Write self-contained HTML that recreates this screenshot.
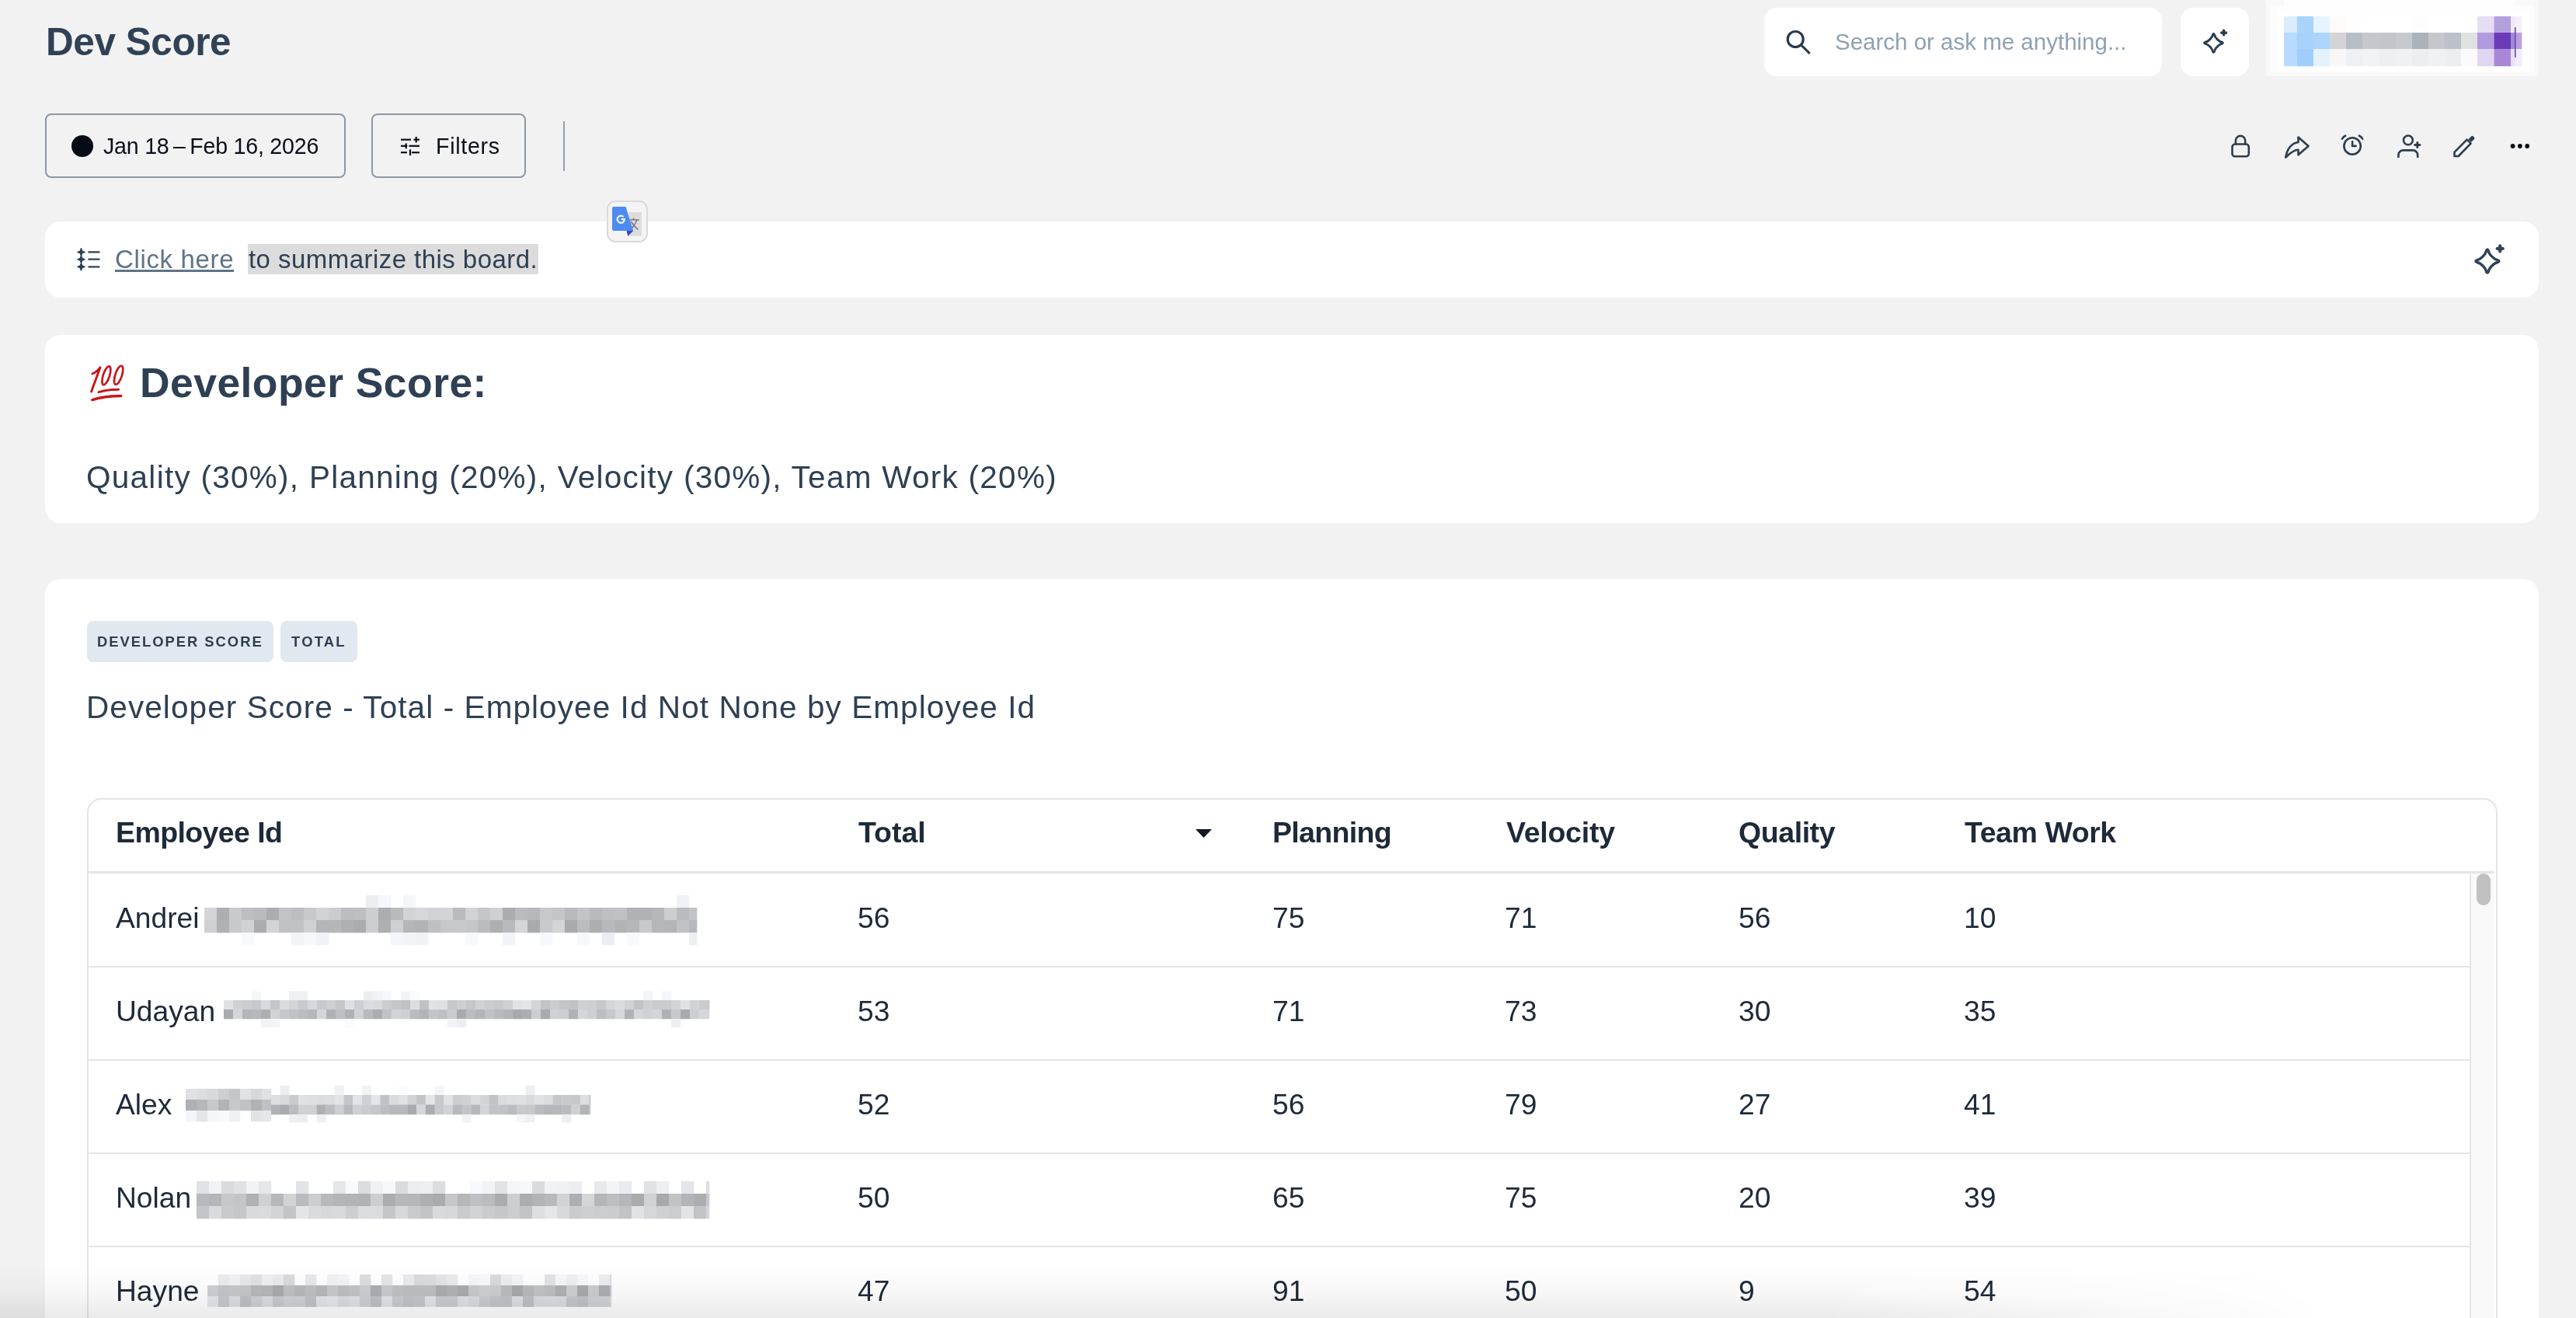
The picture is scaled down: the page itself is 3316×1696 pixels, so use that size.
<!DOCTYPE html>
<html><head><meta charset="utf-8"><title>Dev Score</title>
<style>
html,body{margin:0;padding:0;}
body{width:3316px;height:1696px;overflow:hidden;background:#f2f2f2;position:relative;font-family:"Liberation Sans", sans-serif;}
.t{position:absolute;white-space:pre;line-height:1;-webkit-font-smoothing:antialiased;will-change:transform;}
.box{position:absolute;}
.ab{position:absolute;overflow:visible;}
.tag{background:#e2e8f0;border-radius:8px;}
</style></head><body>
<div class="t" style="left:58.5px;top:29.10px;font-size:49.5px;font-weight:700;color:#2f4256;letter-spacing:-0.45px;">Dev Score</div>
<div class="box" style="left:2271px;top:10px;width:512px;height:88px;border-radius:16px;background:#fff"></div>
<svg class="ab" style="left:2296px;top:36px" width="36" height="36" viewBox="0 0 36 36">
<circle cx="15.2" cy="14.5" r="10" fill="none" stroke="#2a3a4c" stroke-width="3.2"/>
<line x1="22.5" y1="21.8" x2="32.5" y2="31.8" stroke="#2a3a4c" stroke-width="3.2" stroke-linecap="square"/></svg>
<div class="t" style="left:2362px;top:39.03px;font-size:29.5px;font-weight:400;color:#8fa1b3;letter-spacing:0px;">Search or ask me anything...</div>
<div class="box" style="left:2807px;top:10px;width:88px;height:88px;border-radius:16px;background:#fff"></div>
<svg class="ab" style="left:0;top:0" width="3316" height="400" viewBox="0 0 3316 400"><path d="M2848.40,44.70 Q2849.50,42.04 2850.60,44.70 C2851.10,48.30 2856.50,53.70 2860.10,54.20 Q2862.76,55.30 2860.10,56.40 C2856.50,56.90 2851.10,62.30 2850.60,65.90 Q2849.50,68.56 2848.40,65.90 C2847.90,62.30 2842.50,56.90 2838.90,56.40 Q2836.24,55.30 2838.90,54.20 C2842.50,53.70 2847.90,48.30 2848.40,44.70 Z" fill="none" stroke="#2c3d4f" stroke-width="2.9" stroke-linejoin="round"/><path d="M2862.00,39.10 Q2862.60,37.96 2863.20,39.10 C2863.30,41.30 2863.40,41.40 2865.60,41.50 Q2866.74,42.10 2865.60,42.70 C2863.40,42.80 2863.30,42.90 2863.20,45.10 Q2862.60,46.24 2862.00,45.10 C2861.90,42.90 2861.80,42.80 2859.60,42.70 Q2858.46,42.10 2859.60,41.50 C2861.80,41.40 2861.90,41.30 2862.00,39.10 Z" fill="#2c3d4f" stroke="#2c3d4f" stroke-width="2.2" stroke-linejoin="round"/></svg>
<div class="box" style="left:2917px;top:0px;width:351px;height:98px;background:#f9f9f9"></div>
<div class="box" style="left:2923px;top:7px;width:339px;height:86px;background:#fdfdfd"></div>
<div class="box" style="left:2940px;top:0px;width:297px;height:21px;background:#fefefe"></div>
<div class="box" style="left:2933px;top:14px;width:322px;height:78px;background:#fff"></div>
<svg class="ab" style="left:0;top:0" width="3316" height="100"><rect x="2940" y="21" width="17.3" height="21.3" fill="#dcecfc"/><rect x="2957" y="21" width="21.3" height="21.3" fill="#a8d4fc"/><rect x="2978" y="21" width="21.3" height="21.3" fill="#e6f4fe"/><rect x="2999" y="21" width="21.3" height="21.3" fill="#fdfbfa"/><rect x="3020" y="21" width="21.3" height="21.3" fill="#fefefe"/><rect x="3041" y="21" width="22.3" height="21.3" fill="#ffffff"/><rect x="3063" y="21" width="21.3" height="21.3" fill="#ffffff"/><rect x="3084" y="21" width="21.3" height="21.3" fill="#ffffff"/><rect x="3105" y="21" width="21.3" height="21.3" fill="#fdfdfd"/><rect x="3126" y="21" width="21.3" height="21.3" fill="#ffffff"/><rect x="3147" y="21" width="21.3" height="21.3" fill="#ffffff"/><rect x="3168" y="21" width="21.3" height="21.3" fill="#ffffff"/><rect x="3189" y="21" width="21.8" height="21.3" fill="#e6def4"/><rect x="3210.5" y="21" width="21.8" height="21.3" fill="#b5a0de"/><rect x="3232" y="21" width="5.3" height="21.3" fill="#eee8f8"/><rect x="3237" y="21" width="9.3" height="21.3" fill="#f4f0fa"/><rect x="2940" y="42" width="17.3" height="21.3" fill="#b8dafc"/><rect x="2957" y="42" width="21.3" height="21.3" fill="#a6d2fc"/><rect x="2978" y="42" width="21.3" height="21.3" fill="#acd4fc"/><rect x="2999" y="42" width="21.3" height="21.3" fill="#d4d4d6"/><rect x="3020" y="42" width="21.3" height="21.3" fill="#b8bec6"/><rect x="3041" y="42" width="22.3" height="21.3" fill="#c4c8cc"/><rect x="3063" y="42" width="21.3" height="21.3" fill="#c2c6ca"/><rect x="3084" y="42" width="21.3" height="21.3" fill="#c6cace"/><rect x="3105" y="42" width="21.3" height="21.3" fill="#acb2ba"/><rect x="3126" y="42" width="21.3" height="21.3" fill="#c4c8cc"/><rect x="3147" y="42" width="21.3" height="21.3" fill="#bcc0c8"/><rect x="3168" y="42" width="21.3" height="21.3" fill="#e0e2e2"/><rect x="3189" y="42" width="21.8" height="21.3" fill="#b19ade"/><rect x="3210.5" y="42" width="21.8" height="21.3" fill="#6a3cb8"/><rect x="3232" y="42" width="5.3" height="21.3" fill="#a088d8"/><rect x="3237" y="42" width="9.3" height="21.3" fill="#b8a0e0"/><rect x="2940" y="63" width="17.3" height="22.3" fill="#b8dafc"/><rect x="2957" y="63" width="21.3" height="22.3" fill="#a0cefc"/><rect x="2978" y="63" width="21.3" height="22.3" fill="#e4f2fe"/><rect x="2999" y="63" width="21.3" height="22.3" fill="#f8f6f6"/><rect x="3020" y="63" width="21.3" height="22.3" fill="#eff0f2"/><rect x="3041" y="63" width="22.3" height="22.3" fill="#f2f3f5"/><rect x="3063" y="63" width="21.3" height="22.3" fill="#eeeff1"/><rect x="3084" y="63" width="21.3" height="22.3" fill="#f0f1f3"/><rect x="3105" y="63" width="21.3" height="22.3" fill="#edeef0"/><rect x="3126" y="63" width="21.3" height="22.3" fill="#f0f1f3"/><rect x="3147" y="63" width="21.3" height="22.3" fill="#edeef0"/><rect x="3168" y="63" width="21.3" height="22.3" fill="#fbfbfb"/><rect x="3189" y="63" width="21.8" height="22.3" fill="#e0d6f2"/><rect x="3210.5" y="63" width="21.8" height="22.3" fill="#a888d6"/><rect x="3232" y="63" width="5.3" height="22.3" fill="#e8e0f6"/><rect x="3237" y="63" width="9.3" height="22.3" fill="#f0ecf8"/><rect x="3237" y="35" width="1.6" height="39" fill="#6a4ab0"/></svg>
<div class="box" style="left:58px;top:146px;width:387px;height:83px;border:2px solid #8c98a5;border-radius:8px;box-sizing:border-box"></div>
<div class="box" style="left:92px;top:174px;width:28px;height:28px;border-radius:50%;background:#060b16"></div>
<div class="t" style="left:132.5px;top:173.79px;font-size:28.6px;font-weight:400;color:#0a0f1a;letter-spacing:-0.22px;">Jan 18 – Feb 16, 2026</div>
<div class="box" style="left:478px;top:146px;width:199px;height:83px;border:2px solid #8c98a5;border-radius:8px;box-sizing:border-box"></div>
<svg class="ab" style="left:510px;top:170px" width="36" height="36" viewBox="510 170 36 36">
<g stroke="#0a0f1a" stroke-width="2.2" fill="none">
<line x1="516" y1="179.7" x2="529" y2="179.7"/><line x1="532.5" y1="179.7" x2="540" y2="179.7"/><line x1="535.7" y1="176" x2="535.7" y2="183.5"/>
<line x1="516" y1="187.8" x2="524.3" y2="187.8"/><line x1="526.5" y1="187.8" x2="540" y2="187.8"/><line x1="522.7" y1="184.4" x2="522.7" y2="191.2"/>
<line x1="516" y1="196.2" x2="524" y2="196.2"/><line x1="530" y1="196.2" x2="540" y2="196.2"/><line x1="528" y1="192.3" x2="528" y2="200"/>
</g></svg>
<div class="t" style="left:561px;top:173.79px;font-size:28.6px;font-weight:400;color:#0a0f1a;letter-spacing:0.7px;">Filters</div>
<div class="box" style="left:725px;top:156px;width:2px;height:64px;background:#949ea9"></div>
<svg class="ab" style="left:2860px;top:160px" width="420" height="60" viewBox="2860 160 420 60">
<g fill="none" stroke="#2c3d4f" stroke-width="2.6" stroke-linecap="round" stroke-linejoin="round">
<rect x="2873.5" y="185.5" width="21.3" height="15.8" rx="3.6"/>
<path d="M2877.9,185.3 V181 a6.15,6.15 0 0 1 12.3,0 V185.3"/>
<g transform="translate(2937.3,170) scale(1.63)" stroke-width="1.6"><path d="M13 4v4c-6.575 1.028 -9.02 6.788 -10 12c-.037 .206 5.384 -5.962 10 -6v4l8 -7l-8 -7z"/></g>
<circle cx="3028.1" cy="187.9" r="10.7"/>
<path d="M3028.1,182.2 V187.9 H3032.6"/>
<path d="M3015,178.6 a9,9 0 0 1 4.2,-3.9"/><path d="M3041.2,178.6 a9,9 0 0 0 -4.2,-3.9"/>
<circle cx="3099.9" cy="180.4" r="5.9"/>
<path d="M3087.4,201.9 V199.6 a6.2,6.2 0 0 1 6.2,-6.2 H3106 a6.2,6.2 0 0 1 6.2,6.2 V201.9"/>
<path d="M3159.5,201 V195.8 L3175.6,179.7 L3180.6,184.7 L3164.6,201 Z"/>
</g>
<path d="M3111.8,183.3 V189.7 M3108.6,186.5 H3115" stroke="#2c3d4f" stroke-width="2.8" stroke-linecap="round"/>
<path d="M3177.4,179.3 L3181.4,175.3 a1.5,1.5 0 0 1 2.1,0 L3185,176.8 a1.5,1.5 0 0 1 0,2.1 L3181,182.9 Z" fill="#2c3d4f"/>
<g fill="#0b1018"><circle cx="3234.6" cy="188" r="2.9"/><circle cx="3243.9" cy="188" r="2.9"/><circle cx="3253.2" cy="188" r="2.9"/></g>
</svg>
<div class="box" style="left:58px;top:285px;width:3210px;height:98px;border-radius:20px;background:#fff"></div>
<svg class="ab" style="left:95px;top:315px" width="40" height="36" viewBox="95 315 40 36">
<g fill="#2d4258" stroke="#2d4258" stroke-width="1.6" stroke-linejoin="round">
<path d="M104.5,319.8 L105.7,323.2 L108.9,324.4 L105.7,325.6 L104.5,329 L103.3,325.6 L100.1,324.4 L103.3,323.2 Z"/>
<path d="M104.5,329.2 L105.7,332.5 L108.9,333.7 L105.7,334.9 L104.5,338.2 L103.3,334.9 L100.1,333.7 L103.3,332.5 Z"/>
<path d="M104.5,338.7 L105.7,342.1 L108.9,343.3 L105.7,344.5 L104.5,347.8 L103.3,344.5 L100.1,343.3 L103.3,342.1 Z"/>
</g>
<g stroke="#2d4258" stroke-width="2.2" stroke-linecap="round"><line x1="114.3" y1="324.4" x2="127.6" y2="324.4"/><line x1="114.3" y1="333.7" x2="127.6" y2="333.7"/><line x1="114.3" y1="343.3" x2="127.6" y2="343.3"/></g>
</svg>
<div class="t" style="left:148px;top:317.07px;font-size:33px;font-weight:400;color:#5f7488;letter-spacing:0.65px;">Click here</div>
<div class="box" style="left:148px;top:347px;width:153px;height:3px;background:#5f7488"></div>
<div class="box" style="left:319px;top:313.5px;width:374px;height:39px;background:#dcdcdc"></div>
<div class="t" style="left:320px;top:317.07px;font-size:33px;font-weight:400;color:#2f4054;letter-spacing:0.45px;">to summarize this board.</div>
<svg class="ab" style="left:0;top:0" width="3316" height="400" viewBox="0 0 3316 400"><path d="M3200.50,322.70 Q3201.90,319.28 3203.30,322.70 C3203.90,327.30 3210.70,334.10 3215.30,334.70 Q3218.72,336.10 3215.30,337.50 C3210.70,338.10 3203.90,344.90 3203.30,349.50 Q3201.90,352.92 3200.50,349.50 C3199.90,344.90 3193.10,338.10 3188.50,337.50 Q3185.08,336.10 3188.50,334.70 C3193.10,334.10 3199.90,327.30 3200.50,322.70 Z" fill="none" stroke="#2f4358" stroke-width="3.3" stroke-linejoin="round"/><path d="M3217.50,316.20 Q3218.20,314.87 3218.90,316.20 C3219.00,318.90 3219.20,319.10 3221.90,319.20 Q3223.23,319.90 3221.90,320.60 C3219.20,320.70 3219.00,320.90 3218.90,323.60 Q3218.20,324.93 3217.50,323.60 C3217.40,320.90 3217.20,320.70 3214.50,320.60 Q3213.17,319.90 3214.50,319.20 C3217.20,319.10 3217.40,318.90 3217.50,316.20 Z" fill="#2f4358" stroke="#2f4358" stroke-width="2.6" stroke-linejoin="round"/></svg>
<div class="box" style="left:780.5px;top:258px;width:53px;height:53.5px;border:2px solid #dadada;border-radius:11px;background:#f4f4f4;box-sizing:border-box"></div>
<svg class="ab" style="left:780px;top:258px" width="54" height="54" viewBox="780 258 54 54">
<rect x="809.3" y="273" width="16.5" height="30.7" rx="1" fill="#dcdcdc"/>
<g stroke="#6e6e6e" stroke-width="1.3" fill="none"><line x1="811" y1="282.9" x2="822.8" y2="282.9"/><line x1="815.5" y1="280.5" x2="815.5" y2="283"/><path d="M811.5,296 C815,292 818,288 819.8,283"/><path d="M812.5,285 C815,290 818,293 821.5,295.5"/></g>
<path d="M790,265.9 H805.5 L815.2,297 H790 a2,2 0 0 1 -2,-2 V267.9 a2,2 0 0 1 2,-2 Z" fill="#4d8bf0"/>
<path d="M806.6,297 H815.2 L808.2,303.7 Z" fill="#3a47b5"/>
<path d="M802.6,279.0 A4.6,4.6 0 1 0 803.9,282.2 H799.6" fill="none" stroke="#eef3fd" stroke-width="2.2"/>
</svg>
<div class="box" style="left:58px;top:431px;width:3210px;height:242px;border-radius:20px;background:#fff"></div>
<svg class="ab" style="left:110px;top:462px" width="60" height="60" viewBox="110 462 60 60">
<g fill="none" stroke="#c8161a" stroke-linecap="round" stroke-linejoin="round">
<path d="M118.8,481 C122.5,479.5 126,476.5 129,472.8 C125.5,483 121,494 117.6,504" stroke-width="2.9"/>
<ellipse cx="136.9" cy="483.2" rx="4.1" ry="12.4" transform="rotate(18 136.9 483.2)" stroke-width="2.7"/>
<ellipse cx="152.6" cy="482.8" rx="4.3" ry="12.6" transform="rotate(18 152.6 482.8)" stroke-width="2.7"/>
<path d="M127,504.6 C135,502 144,501 152.6,501.2" stroke-width="3"/>
<path d="M118.8,514.6 C130,511 143,509.5 155.8,509.5" stroke-width="3.3"/>
</g></svg>
<div class="t" style="left:179.5px;top:466.41px;font-size:53.5px;font-weight:700;color:#2f4054;letter-spacing:0.42px;">Developer Score:</div>
<div class="t" style="left:111px;top:593.52px;font-size:40.5px;font-weight:400;color:#2f4054;letter-spacing:1.27px;">Quality (30%), Planning (20%), Velocity (30%), Team Work (20%)</div>
<div class="box" style="left:58px;top:745px;width:3210px;height:1000px;border-radius:20px;background:#fff"></div>
<div class="box tag" style="left:112px;top:799px;width:240px;height:52.5px"></div>
<div class="box tag" style="left:361px;top:799px;width:99px;height:52.5px"></div>
<div class="t" style="left:125px;top:816.72px;font-size:18.4px;font-weight:700;color:#2f3d4f;letter-spacing:1.98px;">DEVELOPER SCORE</div>
<div class="t" style="left:374.5px;top:816.72px;font-size:18.4px;font-weight:700;color:#2f3d4f;letter-spacing:2.25px;">TOTAL</div>
<div class="t" style="left:111px;top:889.72px;font-size:40.5px;font-weight:400;color:#2f4054;letter-spacing:1.08px;">Developer Score - Total - Employee Id Not None by Employee Id</div>
<div class="box" style="left:112px;top:1026.5px;width:3102.5px;height:800px;border:2px solid #e4e5e7;border-radius:18px;box-sizing:border-box"></div>
<div class="box" style="left:114px;top:1121px;width:3097px;height:3px;background:#e3e5e8"></div>
<div class="box" style="left:3179px;top:1124px;width:30px;height:700px;background:#f9f9f9;border-left:2px solid #e6e6e6"></div>
<div class="box" style="left:3188px;top:1124px;width:18px;height:41px;background:#c1c1c1;border-radius:9px"></div>
<div class="t" style="left:149px;top:1052.76px;font-size:37.5px;font-weight:700;color:#1e2a3a;letter-spacing:-0.6px;">Employee Id</div>
<div class="t" style="left:1105px;top:1052.76px;font-size:37.5px;font-weight:700;color:#1e2a3a;letter-spacing:0px;">Total</div>
<div class="t" style="left:1638px;top:1052.76px;font-size:37.5px;font-weight:700;color:#1e2a3a;letter-spacing:-0.67px;">Planning</div>
<div class="t" style="left:1939px;top:1052.76px;font-size:37.5px;font-weight:700;color:#1e2a3a;letter-spacing:-0.25px;">Velocity</div>
<div class="t" style="left:2238px;top:1052.76px;font-size:37.5px;font-weight:700;color:#1e2a3a;letter-spacing:-0.43px;">Quality</div>
<div class="t" style="left:2529px;top:1052.76px;font-size:37.5px;font-weight:700;color:#1e2a3a;letter-spacing:-0.44px;">Team Work</div>
<svg class="ab" style="left:1535px;top:1062px" width="30" height="20" viewBox="1535 1062 30 20"><path d="M1539,1067 H1560 L1549.5,1078 Z" fill="#0f1722"/></svg>
<div class="t" style="left:149px;top:1162.51px;font-size:37.2px;font-weight:400;color:#1e2a3a;letter-spacing:0px;">Andrei</div>
<div class="t" style="left:1104px;top:1162.51px;font-size:37.2px;font-weight:400;color:#1e2a3a;letter-spacing:0px;">56</div>
<div class="t" style="left:1638px;top:1162.51px;font-size:37.2px;font-weight:400;color:#1e2a3a;letter-spacing:0px;">75</div>
<div class="t" style="left:1937px;top:1162.51px;font-size:37.2px;font-weight:400;color:#1e2a3a;letter-spacing:0px;">71</div>
<div class="t" style="left:2238px;top:1162.51px;font-size:37.2px;font-weight:400;color:#1e2a3a;letter-spacing:0px;">56</div>
<div class="t" style="left:2528px;top:1162.51px;font-size:37.2px;font-weight:400;color:#1e2a3a;letter-spacing:0px;">10</div>
<div class="box" style="left:114px;top:1242.5px;width:3065px;height:2.5px;background:#e5e5e7"></div>
<div class="t" style="left:149px;top:1282.61px;font-size:37.2px;font-weight:400;color:#1e2a3a;letter-spacing:0px;">Udayan</div>
<div class="t" style="left:1104px;top:1282.61px;font-size:37.2px;font-weight:400;color:#1e2a3a;letter-spacing:0px;">53</div>
<div class="t" style="left:1638px;top:1282.61px;font-size:37.2px;font-weight:400;color:#1e2a3a;letter-spacing:0px;">71</div>
<div class="t" style="left:1937px;top:1282.61px;font-size:37.2px;font-weight:400;color:#1e2a3a;letter-spacing:0px;">73</div>
<div class="t" style="left:2238px;top:1282.61px;font-size:37.2px;font-weight:400;color:#1e2a3a;letter-spacing:0px;">30</div>
<div class="t" style="left:2528px;top:1282.61px;font-size:37.2px;font-weight:400;color:#1e2a3a;letter-spacing:0px;">35</div>
<div class="box" style="left:114px;top:1362.6px;width:3065px;height:2.5px;background:#e5e5e7"></div>
<div class="t" style="left:149px;top:1402.71px;font-size:37.2px;font-weight:400;color:#1e2a3a;letter-spacing:0px;">Alex</div>
<div class="t" style="left:1104px;top:1402.71px;font-size:37.2px;font-weight:400;color:#1e2a3a;letter-spacing:0px;">52</div>
<div class="t" style="left:1638px;top:1402.71px;font-size:37.2px;font-weight:400;color:#1e2a3a;letter-spacing:0px;">56</div>
<div class="t" style="left:1937px;top:1402.71px;font-size:37.2px;font-weight:400;color:#1e2a3a;letter-spacing:0px;">79</div>
<div class="t" style="left:2238px;top:1402.71px;font-size:37.2px;font-weight:400;color:#1e2a3a;letter-spacing:0px;">27</div>
<div class="t" style="left:2528px;top:1402.71px;font-size:37.2px;font-weight:400;color:#1e2a3a;letter-spacing:0px;">41</div>
<div class="box" style="left:114px;top:1482.7px;width:3065px;height:2.5px;background:#e5e5e7"></div>
<div class="t" style="left:149px;top:1522.81px;font-size:37.2px;font-weight:400;color:#1e2a3a;letter-spacing:0px;">Nolan</div>
<div class="t" style="left:1104px;top:1522.81px;font-size:37.2px;font-weight:400;color:#1e2a3a;letter-spacing:0px;">50</div>
<div class="t" style="left:1638px;top:1522.81px;font-size:37.2px;font-weight:400;color:#1e2a3a;letter-spacing:0px;">65</div>
<div class="t" style="left:1937px;top:1522.81px;font-size:37.2px;font-weight:400;color:#1e2a3a;letter-spacing:0px;">75</div>
<div class="t" style="left:2238px;top:1522.81px;font-size:37.2px;font-weight:400;color:#1e2a3a;letter-spacing:0px;">20</div>
<div class="t" style="left:2528px;top:1522.81px;font-size:37.2px;font-weight:400;color:#1e2a3a;letter-spacing:0px;">39</div>
<div class="box" style="left:114px;top:1602.8px;width:3065px;height:2.5px;background:#e5e5e7"></div>
<div class="t" style="left:149px;top:1642.91px;font-size:37.2px;font-weight:400;color:#1e2a3a;letter-spacing:0px;">Hayne</div>
<div class="t" style="left:1104px;top:1642.91px;font-size:37.2px;font-weight:400;color:#1e2a3a;letter-spacing:0px;">47</div>
<div class="t" style="left:1638px;top:1642.91px;font-size:37.2px;font-weight:400;color:#1e2a3a;letter-spacing:0px;">91</div>
<div class="t" style="left:1937px;top:1642.91px;font-size:37.2px;font-weight:400;color:#1e2a3a;letter-spacing:0px;">50</div>
<div class="t" style="left:2238px;top:1642.91px;font-size:37.2px;font-weight:400;color:#1e2a3a;letter-spacing:0px;">9</div>
<div class="t" style="left:2528px;top:1642.91px;font-size:37.2px;font-weight:400;color:#1e2a3a;letter-spacing:0px;">54</div>
<svg class="ab" style="left:0;top:0" width="3316" height="1696" viewBox="0 0 3316 1696"><rect x="471.0" y="1152.0" width="16.3" height="16.3" fill="rgb(237,238,242)"/><rect x="487.0" y="1152.0" width="16.3" height="16.3" fill="rgb(246,247,251)"/><rect x="519.0" y="1152.0" width="16.3" height="16.3" fill="rgb(245,246,250)"/><rect x="871.0" y="1152.0" width="16.3" height="16.3" fill="rgb(241,242,246)"/><rect x="263.0" y="1168.0" width="16.3" height="16.3" fill="rgb(212,213,217)"/><rect x="279.0" y="1168.0" width="16.3" height="16.3" fill="rgb(173,174,178)"/><rect x="295.0" y="1168.0" width="16.3" height="16.3" fill="rgb(201,202,206)"/><rect x="311.0" y="1168.0" width="16.3" height="16.3" fill="rgb(189,190,194)"/><rect x="327.0" y="1168.0" width="16.3" height="16.3" fill="rgb(186,187,191)"/><rect x="343.0" y="1168.0" width="16.3" height="16.3" fill="rgb(172,173,177)"/><rect x="359.0" y="1168.0" width="16.3" height="16.3" fill="rgb(194,195,199)"/><rect x="375.0" y="1168.0" width="16.3" height="16.3" fill="rgb(189,190,194)"/><rect x="391.0" y="1168.0" width="16.3" height="16.3" fill="rgb(199,200,204)"/><rect x="407.0" y="1168.0" width="16.3" height="16.3" fill="rgb(210,211,215)"/><rect x="423.0" y="1168.0" width="16.3" height="16.3" fill="rgb(203,204,208)"/><rect x="439.0" y="1168.0" width="16.3" height="16.3" fill="rgb(188,189,193)"/><rect x="455.0" y="1168.0" width="16.3" height="16.3" fill="rgb(190,191,195)"/><rect x="471.0" y="1168.0" width="16.3" height="16.3" fill="rgb(205,206,210)"/><rect x="487.0" y="1168.0" width="16.3" height="16.3" fill="rgb(172,173,177)"/><rect x="503.0" y="1168.0" width="16.3" height="16.3" fill="rgb(185,186,190)"/><rect x="519.0" y="1168.0" width="16.3" height="16.3" fill="rgb(210,211,215)"/><rect x="535.0" y="1168.0" width="16.3" height="16.3" fill="rgb(214,215,219)"/><rect x="551.0" y="1168.0" width="16.3" height="16.3" fill="rgb(209,210,214)"/><rect x="567.0" y="1168.0" width="16.3" height="16.3" fill="rgb(211,212,216)"/><rect x="583.0" y="1168.0" width="16.3" height="16.3" fill="rgb(186,187,191)"/><rect x="599.0" y="1168.0" width="16.3" height="16.3" fill="rgb(210,211,215)"/><rect x="615.0" y="1168.0" width="16.3" height="16.3" fill="rgb(197,198,202)"/><rect x="631.0" y="1168.0" width="16.3" height="16.3" fill="rgb(207,208,212)"/><rect x="647.0" y="1168.0" width="16.3" height="16.3" fill="rgb(171,172,176)"/><rect x="663.0" y="1168.0" width="16.3" height="16.3" fill="rgb(186,187,191)"/><rect x="679.0" y="1168.0" width="16.3" height="16.3" fill="rgb(183,184,188)"/><rect x="695.0" y="1168.0" width="16.3" height="16.3" fill="rgb(199,200,204)"/><rect x="711.0" y="1168.0" width="16.3" height="16.3" fill="rgb(196,197,201)"/><rect x="727.0" y="1168.0" width="16.3" height="16.3" fill="rgb(185,186,190)"/><rect x="743.0" y="1168.0" width="16.3" height="16.3" fill="rgb(195,196,200)"/><rect x="759.0" y="1168.0" width="16.3" height="16.3" fill="rgb(185,186,190)"/><rect x="775.0" y="1168.0" width="16.3" height="16.3" fill="rgb(190,191,195)"/><rect x="791.0" y="1168.0" width="16.3" height="16.3" fill="rgb(192,193,197)"/><rect x="807.0" y="1168.0" width="16.3" height="16.3" fill="rgb(177,178,182)"/><rect x="823.0" y="1168.0" width="16.3" height="16.3" fill="rgb(177,178,182)"/><rect x="839.0" y="1168.0" width="16.3" height="16.3" fill="rgb(182,183,187)"/><rect x="855.0" y="1168.0" width="16.3" height="16.3" fill="rgb(205,206,210)"/><rect x="871.0" y="1168.0" width="16.3" height="16.3" fill="rgb(186,187,191)"/><rect x="887.0" y="1168.0" width="10.3" height="16.3" fill="rgb(194,195,199)"/><rect x="263.0" y="1184.0" width="16.3" height="16.3" fill="rgb(207,208,212)"/><rect x="279.0" y="1184.0" width="16.3" height="16.3" fill="rgb(176,177,181)"/><rect x="295.0" y="1184.0" width="16.3" height="16.3" fill="rgb(200,201,205)"/><rect x="311.0" y="1184.0" width="16.3" height="16.3" fill="rgb(209,210,214)"/><rect x="327.0" y="1184.0" width="16.3" height="16.3" fill="rgb(171,172,176)"/><rect x="343.0" y="1184.0" width="16.3" height="16.3" fill="rgb(211,212,216)"/><rect x="359.0" y="1184.0" width="16.3" height="16.3" fill="rgb(193,194,198)"/><rect x="375.0" y="1184.0" width="16.3" height="16.3" fill="rgb(193,194,198)"/><rect x="391.0" y="1184.0" width="16.3" height="16.3" fill="rgb(208,209,213)"/><rect x="407.0" y="1184.0" width="16.3" height="16.3" fill="rgb(180,181,185)"/><rect x="423.0" y="1184.0" width="16.3" height="16.3" fill="rgb(181,182,186)"/><rect x="439.0" y="1184.0" width="16.3" height="16.3" fill="rgb(175,176,180)"/><rect x="455.0" y="1184.0" width="16.3" height="16.3" fill="rgb(171,172,176)"/><rect x="471.0" y="1184.0" width="16.3" height="16.3" fill="rgb(204,205,209)"/><rect x="487.0" y="1184.0" width="16.3" height="16.3" fill="rgb(174,175,179)"/><rect x="503.0" y="1184.0" width="16.3" height="16.3" fill="rgb(207,208,212)"/><rect x="519.0" y="1184.0" width="16.3" height="16.3" fill="rgb(181,182,186)"/><rect x="535.0" y="1184.0" width="16.3" height="16.3" fill="rgb(177,178,182)"/><rect x="551.0" y="1184.0" width="16.3" height="16.3" fill="rgb(190,191,195)"/><rect x="567.0" y="1184.0" width="16.3" height="16.3" fill="rgb(198,199,203)"/><rect x="583.0" y="1184.0" width="16.3" height="16.3" fill="rgb(199,200,204)"/><rect x="599.0" y="1184.0" width="16.3" height="16.3" fill="rgb(197,198,202)"/><rect x="615.0" y="1184.0" width="16.3" height="16.3" fill="rgb(187,188,192)"/><rect x="631.0" y="1184.0" width="16.3" height="16.3" fill="rgb(174,175,179)"/><rect x="647.0" y="1184.0" width="16.3" height="16.3" fill="rgb(184,185,189)"/><rect x="663.0" y="1184.0" width="16.3" height="16.3" fill="rgb(212,213,217)"/><rect x="679.0" y="1184.0" width="16.3" height="16.3" fill="rgb(169,170,174)"/><rect x="695.0" y="1184.0" width="16.3" height="16.3" fill="rgb(201,202,206)"/><rect x="711.0" y="1184.0" width="16.3" height="16.3" fill="rgb(212,213,217)"/><rect x="727.0" y="1184.0" width="16.3" height="16.3" fill="rgb(169,170,174)"/><rect x="743.0" y="1184.0" width="16.3" height="16.3" fill="rgb(187,188,192)"/><rect x="759.0" y="1184.0" width="16.3" height="16.3" fill="rgb(173,174,178)"/><rect x="775.0" y="1184.0" width="16.3" height="16.3" fill="rgb(184,185,189)"/><rect x="791.0" y="1184.0" width="16.3" height="16.3" fill="rgb(178,179,183)"/><rect x="807.0" y="1184.0" width="16.3" height="16.3" fill="rgb(182,183,187)"/><rect x="823.0" y="1184.0" width="16.3" height="16.3" fill="rgb(200,201,205)"/><rect x="839.0" y="1184.0" width="16.3" height="16.3" fill="rgb(182,183,187)"/><rect x="855.0" y="1184.0" width="16.3" height="16.3" fill="rgb(180,181,185)"/><rect x="871.0" y="1184.0" width="16.3" height="16.3" fill="rgb(193,194,198)"/><rect x="887.0" y="1184.0" width="10.3" height="16.3" fill="rgb(182,183,187)"/><rect x="311.0" y="1200.0" width="16.3" height="16.3" fill="rgb(248,249,253)"/><rect x="375.0" y="1200.0" width="16.3" height="16.3" fill="rgb(243,244,248)"/><rect x="391.0" y="1200.0" width="16.3" height="16.3" fill="rgb(247,248,252)"/><rect x="407.0" y="1200.0" width="16.3" height="16.3" fill="rgb(241,242,246)"/><rect x="503.0" y="1200.0" width="16.3" height="16.3" fill="rgb(245,246,250)"/><rect x="519.0" y="1200.0" width="16.3" height="16.3" fill="rgb(243,244,248)"/><rect x="535.0" y="1200.0" width="16.3" height="16.3" fill="rgb(241,242,246)"/><rect x="599.0" y="1200.0" width="16.3" height="16.3" fill="rgb(248,249,253)"/><rect x="647.0" y="1200.0" width="16.3" height="16.3" fill="rgb(242,243,247)"/><rect x="695.0" y="1200.0" width="16.3" height="16.3" fill="rgb(247,248,252)"/><rect x="743.0" y="1200.0" width="16.3" height="16.3" fill="rgb(247,248,252)"/><rect x="775.0" y="1200.0" width="16.3" height="16.3" fill="rgb(236,237,241)"/><rect x="807.0" y="1200.0" width="16.3" height="16.3" fill="rgb(248,249,253)"/><rect x="887.0" y="1200.0" width="10.3" height="16.3" fill="rgb(238,239,243)"/><rect x="324.0" y="1275.5" width="12.3" height="11.8" fill="rgb(246,247,251)"/><rect x="372.0" y="1275.5" width="12.3" height="11.8" fill="rgb(239,240,244)"/><rect x="384.0" y="1275.5" width="12.3" height="11.8" fill="rgb(239,240,244)"/><rect x="468.0" y="1275.5" width="12.3" height="11.8" fill="rgb(236,237,241)"/><rect x="480.0" y="1275.5" width="12.3" height="11.8" fill="rgb(241,242,246)"/><rect x="492.0" y="1275.5" width="12.3" height="11.8" fill="rgb(246,247,251)"/><rect x="516.0" y="1275.5" width="12.3" height="11.8" fill="rgb(242,243,247)"/><rect x="528.0" y="1275.5" width="12.3" height="11.8" fill="rgb(250,251,255)"/><rect x="828.0" y="1275.5" width="12.3" height="11.8" fill="rgb(243,244,248)"/><rect x="852.0" y="1275.5" width="12.3" height="11.8" fill="rgb(245,246,250)"/><rect x="288.0" y="1287.0" width="12.3" height="12.3" fill="rgb(225,226,230)"/><rect x="300.0" y="1287.0" width="12.3" height="12.3" fill="rgb(208,209,213)"/><rect x="312.0" y="1287.0" width="12.3" height="12.3" fill="rgb(204,205,209)"/><rect x="324.0" y="1287.0" width="12.3" height="12.3" fill="rgb(200,201,205)"/><rect x="336.0" y="1287.0" width="12.3" height="12.3" fill="rgb(217,218,222)"/><rect x="348.0" y="1287.0" width="12.3" height="12.3" fill="rgb(196,197,201)"/><rect x="360.0" y="1287.0" width="12.3" height="12.3" fill="rgb(219,220,224)"/><rect x="372.0" y="1287.0" width="12.3" height="12.3" fill="rgb(211,212,216)"/><rect x="384.0" y="1287.0" width="12.3" height="12.3" fill="rgb(201,202,206)"/><rect x="396.0" y="1287.0" width="12.3" height="12.3" fill="rgb(215,216,220)"/><rect x="408.0" y="1287.0" width="12.3" height="12.3" fill="rgb(200,201,205)"/><rect x="420.0" y="1287.0" width="12.3" height="12.3" fill="rgb(206,207,211)"/><rect x="432.0" y="1287.0" width="12.3" height="12.3" fill="rgb(198,199,203)"/><rect x="444.0" y="1287.0" width="12.3" height="12.3" fill="rgb(223,224,228)"/><rect x="456.0" y="1287.0" width="12.3" height="12.3" fill="rgb(206,207,211)"/><rect x="468.0" y="1287.0" width="12.3" height="12.3" fill="rgb(219,220,224)"/><rect x="480.0" y="1287.0" width="12.3" height="12.3" fill="rgb(217,218,222)"/><rect x="492.0" y="1287.0" width="12.3" height="12.3" fill="rgb(204,205,209)"/><rect x="504.0" y="1287.0" width="12.3" height="12.3" fill="rgb(197,198,202)"/><rect x="516.0" y="1287.0" width="12.3" height="12.3" fill="rgb(193,194,198)"/><rect x="528.0" y="1287.0" width="12.3" height="12.3" fill="rgb(221,222,226)"/><rect x="540.0" y="1287.0" width="12.3" height="12.3" fill="rgb(193,194,198)"/><rect x="552.0" y="1287.0" width="12.3" height="12.3" fill="rgb(225,226,230)"/><rect x="564.0" y="1287.0" width="12.3" height="12.3" fill="rgb(224,225,229)"/><rect x="576.0" y="1287.0" width="12.3" height="12.3" fill="rgb(199,200,204)"/><rect x="588.0" y="1287.0" width="12.3" height="12.3" fill="rgb(206,207,211)"/><rect x="600.0" y="1287.0" width="12.3" height="12.3" fill="rgb(198,199,203)"/><rect x="612.0" y="1287.0" width="12.3" height="12.3" fill="rgb(209,210,214)"/><rect x="624.0" y="1287.0" width="12.3" height="12.3" fill="rgb(203,204,208)"/><rect x="636.0" y="1287.0" width="12.3" height="12.3" fill="rgb(200,201,205)"/><rect x="648.0" y="1287.0" width="12.3" height="12.3" fill="rgb(208,209,213)"/><rect x="660.0" y="1287.0" width="12.3" height="12.3" fill="rgb(226,227,231)"/><rect x="672.0" y="1287.0" width="12.3" height="12.3" fill="rgb(228,229,233)"/><rect x="684.0" y="1287.0" width="12.3" height="12.3" fill="rgb(212,213,217)"/><rect x="696.0" y="1287.0" width="12.3" height="12.3" fill="rgb(195,196,200)"/><rect x="708.0" y="1287.0" width="12.3" height="12.3" fill="rgb(203,204,208)"/><rect x="720.0" y="1287.0" width="12.3" height="12.3" fill="rgb(196,197,201)"/><rect x="732.0" y="1287.0" width="12.3" height="12.3" fill="rgb(193,194,198)"/><rect x="744.0" y="1287.0" width="12.3" height="12.3" fill="rgb(208,209,213)"/><rect x="756.0" y="1287.0" width="12.3" height="12.3" fill="rgb(206,207,211)"/><rect x="768.0" y="1287.0" width="12.3" height="12.3" fill="rgb(199,200,204)"/><rect x="780.0" y="1287.0" width="12.3" height="12.3" fill="rgb(213,214,218)"/><rect x="792.0" y="1287.0" width="12.3" height="12.3" fill="rgb(218,219,223)"/><rect x="804.0" y="1287.0" width="12.3" height="12.3" fill="rgb(209,210,214)"/><rect x="816.0" y="1287.0" width="12.3" height="12.3" fill="rgb(194,195,199)"/><rect x="828.0" y="1287.0" width="12.3" height="12.3" fill="rgb(207,208,212)"/><rect x="840.0" y="1287.0" width="12.3" height="12.3" fill="rgb(202,203,207)"/><rect x="852.0" y="1287.0" width="12.3" height="12.3" fill="rgb(203,204,208)"/><rect x="864.0" y="1287.0" width="12.3" height="12.3" fill="rgb(211,212,216)"/><rect x="876.0" y="1287.0" width="12.3" height="12.3" fill="rgb(225,226,230)"/><rect x="888.0" y="1287.0" width="12.3" height="12.3" fill="rgb(210,211,215)"/><rect x="900.0" y="1287.0" width="12.3" height="12.3" fill="rgb(203,204,208)"/><rect x="912.0" y="1287.0" width="1.3" height="12.3" fill="rgb(193,194,198)"/><rect x="288.0" y="1299.0" width="12.3" height="12.3" fill="rgb(170,171,175)"/><rect x="300.0" y="1299.0" width="12.3" height="12.3" fill="rgb(214,215,219)"/><rect x="312.0" y="1299.0" width="12.3" height="12.3" fill="rgb(180,181,185)"/><rect x="324.0" y="1299.0" width="12.3" height="12.3" fill="rgb(183,184,188)"/><rect x="336.0" y="1299.0" width="12.3" height="12.3" fill="rgb(174,175,179)"/><rect x="348.0" y="1299.0" width="12.3" height="12.3" fill="rgb(209,210,214)"/><rect x="360.0" y="1299.0" width="12.3" height="12.3" fill="rgb(199,200,204)"/><rect x="372.0" y="1299.0" width="12.3" height="12.3" fill="rgb(193,194,198)"/><rect x="384.0" y="1299.0" width="12.3" height="12.3" fill="rgb(187,188,192)"/><rect x="396.0" y="1299.0" width="12.3" height="12.3" fill="rgb(182,183,187)"/><rect x="408.0" y="1299.0" width="12.3" height="12.3" fill="rgb(213,214,218)"/><rect x="420.0" y="1299.0" width="12.3" height="12.3" fill="rgb(176,177,181)"/><rect x="432.0" y="1299.0" width="12.3" height="12.3" fill="rgb(190,191,195)"/><rect x="444.0" y="1299.0" width="12.3" height="12.3" fill="rgb(176,177,181)"/><rect x="456.0" y="1299.0" width="12.3" height="12.3" fill="rgb(208,209,213)"/><rect x="468.0" y="1299.0" width="12.3" height="12.3" fill="rgb(184,185,189)"/><rect x="480.0" y="1299.0" width="12.3" height="12.3" fill="rgb(171,172,176)"/><rect x="492.0" y="1299.0" width="12.3" height="12.3" fill="rgb(192,193,197)"/><rect x="504.0" y="1299.0" width="12.3" height="12.3" fill="rgb(210,211,215)"/><rect x="516.0" y="1299.0" width="12.3" height="12.3" fill="rgb(206,207,211)"/><rect x="528.0" y="1299.0" width="12.3" height="12.3" fill="rgb(186,187,191)"/><rect x="540.0" y="1299.0" width="12.3" height="12.3" fill="rgb(179,180,184)"/><rect x="552.0" y="1299.0" width="12.3" height="12.3" fill="rgb(196,197,201)"/><rect x="564.0" y="1299.0" width="12.3" height="12.3" fill="rgb(191,192,196)"/><rect x="576.0" y="1299.0" width="12.3" height="12.3" fill="rgb(203,204,208)"/><rect x="588.0" y="1299.0" width="12.3" height="12.3" fill="rgb(170,171,175)"/><rect x="600.0" y="1299.0" width="12.3" height="12.3" fill="rgb(187,188,192)"/><rect x="612.0" y="1299.0" width="12.3" height="12.3" fill="rgb(179,180,184)"/><rect x="624.0" y="1299.0" width="12.3" height="12.3" fill="rgb(192,193,197)"/><rect x="636.0" y="1299.0" width="12.3" height="12.3" fill="rgb(185,186,190)"/><rect x="648.0" y="1299.0" width="12.3" height="12.3" fill="rgb(180,181,185)"/><rect x="660.0" y="1299.0" width="12.3" height="12.3" fill="rgb(168,169,173)"/><rect x="672.0" y="1299.0" width="12.3" height="12.3" fill="rgb(173,174,178)"/><rect x="684.0" y="1299.0" width="12.3" height="12.3" fill="rgb(205,206,210)"/><rect x="696.0" y="1299.0" width="12.3" height="12.3" fill="rgb(169,170,174)"/><rect x="708.0" y="1299.0" width="12.3" height="12.3" fill="rgb(208,209,213)"/><rect x="720.0" y="1299.0" width="12.3" height="12.3" fill="rgb(205,206,210)"/><rect x="732.0" y="1299.0" width="12.3" height="12.3" fill="rgb(177,178,182)"/><rect x="744.0" y="1299.0" width="12.3" height="12.3" fill="rgb(213,214,218)"/><rect x="756.0" y="1299.0" width="12.3" height="12.3" fill="rgb(206,207,211)"/><rect x="768.0" y="1299.0" width="12.3" height="12.3" fill="rgb(188,189,193)"/><rect x="780.0" y="1299.0" width="12.3" height="12.3" fill="rgb(199,200,204)"/><rect x="792.0" y="1299.0" width="12.3" height="12.3" fill="rgb(214,215,219)"/><rect x="804.0" y="1299.0" width="12.3" height="12.3" fill="rgb(177,178,182)"/><rect x="816.0" y="1299.0" width="12.3" height="12.3" fill="rgb(213,214,218)"/><rect x="828.0" y="1299.0" width="12.3" height="12.3" fill="rgb(208,209,213)"/><rect x="840.0" y="1299.0" width="12.3" height="12.3" fill="rgb(212,213,217)"/><rect x="852.0" y="1299.0" width="12.3" height="12.3" fill="rgb(176,177,181)"/><rect x="864.0" y="1299.0" width="12.3" height="12.3" fill="rgb(200,201,205)"/><rect x="876.0" y="1299.0" width="12.3" height="12.3" fill="rgb(169,170,174)"/><rect x="888.0" y="1299.0" width="12.3" height="12.3" fill="rgb(205,206,210)"/><rect x="900.0" y="1299.0" width="12.3" height="12.3" fill="rgb(213,214,218)"/><rect x="912.0" y="1299.0" width="1.3" height="12.3" fill="rgb(212,213,217)"/><rect x="336.0" y="1311.0" width="12.3" height="11.3" fill="rgb(242,243,247)"/><rect x="348.0" y="1311.0" width="12.3" height="11.3" fill="rgb(244,245,249)"/><rect x="444.0" y="1311.0" width="12.3" height="11.3" fill="rgb(250,251,255)"/><rect x="576.0" y="1311.0" width="12.3" height="11.3" fill="rgb(243,244,248)"/><rect x="588.0" y="1311.0" width="12.3" height="11.3" fill="rgb(237,238,242)"/><rect x="864.0" y="1311.0" width="12.3" height="11.3" fill="rgb(239,240,244)"/><rect x="239.0" y="1401.0" width="14.3" height="14.3" fill="rgb(224,225,229)"/><rect x="253.0" y="1401.0" width="14.3" height="14.3" fill="rgb(220,221,225)"/><rect x="267.0" y="1401.0" width="14.3" height="14.3" fill="rgb(216,217,221)"/><rect x="281.0" y="1401.0" width="14.3" height="14.3" fill="rgb(205,206,210)"/><rect x="295.0" y="1401.0" width="14.3" height="14.3" fill="rgb(197,198,202)"/><rect x="309.0" y="1401.0" width="14.3" height="14.3" fill="rgb(225,226,230)"/><rect x="323.0" y="1401.0" width="14.3" height="14.3" fill="rgb(215,216,220)"/><rect x="337.0" y="1401.0" width="12.3" height="14.3" fill="rgb(224,225,229)"/><rect x="239.0" y="1415.0" width="14.3" height="14.3" fill="rgb(175,176,180)"/><rect x="253.0" y="1415.0" width="14.3" height="14.3" fill="rgb(182,183,187)"/><rect x="267.0" y="1415.0" width="14.3" height="14.3" fill="rgb(199,200,204)"/><rect x="281.0" y="1415.0" width="14.3" height="14.3" fill="rgb(178,179,183)"/><rect x="295.0" y="1415.0" width="14.3" height="14.3" fill="rgb(199,200,204)"/><rect x="309.0" y="1415.0" width="14.3" height="14.3" fill="rgb(193,194,198)"/><rect x="323.0" y="1415.0" width="14.3" height="14.3" fill="rgb(177,178,182)"/><rect x="337.0" y="1415.0" width="12.3" height="14.3" fill="rgb(192,193,197)"/><rect x="239.0" y="1429.0" width="14.3" height="14.3" fill="rgb(244,245,249)"/><rect x="253.0" y="1429.0" width="14.3" height="14.3" fill="rgb(228,229,233)"/><rect x="267.0" y="1429.0" width="14.3" height="14.3" fill="rgb(244,245,249)"/><rect x="281.0" y="1429.0" width="14.3" height="14.3" fill="rgb(248,249,253)"/><rect x="295.0" y="1429.0" width="14.3" height="14.3" fill="rgb(240,241,245)"/><rect x="323.0" y="1429.0" width="14.3" height="14.3" fill="rgb(226,227,231)"/><rect x="337.0" y="1429.0" width="12.3" height="14.3" fill="rgb(230,231,235)"/><rect x="360.7" y="1397.0" width="12.0" height="12.3" fill="rgb(237,238,242)"/><rect x="430.9" y="1397.0" width="12.0" height="12.3" fill="rgb(240,241,245)"/><rect x="466.0" y="1397.0" width="12.0" height="12.3" fill="rgb(242,243,247)"/><rect x="512.8" y="1397.0" width="12.0" height="12.3" fill="rgb(250,251,255)"/><rect x="559.6" y="1397.0" width="12.0" height="12.3" fill="rgb(244,245,249)"/><rect x="676.6" y="1397.0" width="12.0" height="12.3" fill="rgb(238,239,243)"/><rect x="349.0" y="1409.0" width="12.0" height="12.8" fill="rgb(222,223,227)"/><rect x="360.7" y="1409.0" width="12.0" height="12.8" fill="rgb(217,218,222)"/><rect x="372.4" y="1409.0" width="12.0" height="12.8" fill="rgb(202,203,207)"/><rect x="384.1" y="1409.0" width="12.0" height="12.8" fill="rgb(224,225,229)"/><rect x="395.8" y="1409.0" width="12.0" height="12.8" fill="rgb(223,224,228)"/><rect x="407.5" y="1409.0" width="12.0" height="12.8" fill="rgb(220,221,225)"/><rect x="419.2" y="1409.0" width="12.0" height="12.8" fill="rgb(220,221,225)"/><rect x="430.9" y="1409.0" width="12.0" height="12.8" fill="rgb(227,228,232)"/><rect x="442.6" y="1409.0" width="12.0" height="12.8" fill="rgb(197,198,202)"/><rect x="454.3" y="1409.0" width="12.0" height="12.8" fill="rgb(227,228,232)"/><rect x="466.0" y="1409.0" width="12.0" height="12.8" fill="rgb(207,208,212)"/><rect x="477.7" y="1409.0" width="12.0" height="12.8" fill="rgb(228,229,233)"/><rect x="489.4" y="1409.0" width="12.0" height="12.8" fill="rgb(193,194,198)"/><rect x="501.1" y="1409.0" width="12.0" height="12.8" fill="rgb(218,219,223)"/><rect x="512.8" y="1409.0" width="12.0" height="12.8" fill="rgb(225,226,230)"/><rect x="524.5" y="1409.0" width="12.0" height="12.8" fill="rgb(209,210,214)"/><rect x="536.2" y="1409.0" width="12.0" height="12.8" fill="rgb(195,196,200)"/><rect x="547.9" y="1409.0" width="12.0" height="12.8" fill="rgb(228,229,233)"/><rect x="559.6" y="1409.0" width="12.0" height="12.8" fill="rgb(200,201,205)"/><rect x="571.3" y="1409.0" width="12.0" height="12.8" fill="rgb(225,226,230)"/><rect x="583.0" y="1409.0" width="12.0" height="12.8" fill="rgb(205,206,210)"/><rect x="594.7" y="1409.0" width="12.0" height="12.8" fill="rgb(207,208,212)"/><rect x="606.4" y="1409.0" width="12.0" height="12.8" fill="rgb(220,221,225)"/><rect x="618.1" y="1409.0" width="12.0" height="12.8" fill="rgb(211,212,216)"/><rect x="629.8" y="1409.0" width="12.0" height="12.8" fill="rgb(193,194,198)"/><rect x="641.5" y="1409.0" width="12.0" height="12.8" fill="rgb(219,220,224)"/><rect x="653.2" y="1409.0" width="12.0" height="12.8" fill="rgb(222,223,227)"/><rect x="664.9" y="1409.0" width="12.0" height="12.8" fill="rgb(223,224,228)"/><rect x="676.6" y="1409.0" width="12.0" height="12.8" fill="rgb(217,218,222)"/><rect x="688.3" y="1409.0" width="12.0" height="12.8" fill="rgb(225,226,230)"/><rect x="700.0" y="1409.0" width="12.0" height="12.8" fill="rgb(220,221,225)"/><rect x="711.7" y="1409.0" width="12.0" height="12.8" fill="rgb(198,199,203)"/><rect x="723.4" y="1409.0" width="12.0" height="12.8" fill="rgb(201,202,206)"/><rect x="735.1" y="1409.0" width="12.0" height="12.8" fill="rgb(198,199,203)"/><rect x="746.8" y="1409.0" width="12.0" height="12.8" fill="rgb(221,222,226)"/><rect x="758.5" y="1409.0" width="1.8" height="12.8" fill="rgb(194,195,199)"/><rect x="349.0" y="1421.5" width="12.0" height="12.8" fill="rgb(176,177,181)"/><rect x="360.7" y="1421.5" width="12.0" height="12.8" fill="rgb(170,171,175)"/><rect x="372.4" y="1421.5" width="12.0" height="12.8" fill="rgb(187,188,192)"/><rect x="384.1" y="1421.5" width="12.0" height="12.8" fill="rgb(208,209,213)"/><rect x="395.8" y="1421.5" width="12.0" height="12.8" fill="rgb(208,209,213)"/><rect x="407.5" y="1421.5" width="12.0" height="12.8" fill="rgb(175,176,180)"/><rect x="419.2" y="1421.5" width="12.0" height="12.8" fill="rgb(187,188,192)"/><rect x="430.9" y="1421.5" width="12.0" height="12.8" fill="rgb(205,206,210)"/><rect x="442.6" y="1421.5" width="12.0" height="12.8" fill="rgb(184,185,189)"/><rect x="454.3" y="1421.5" width="12.0" height="12.8" fill="rgb(206,207,211)"/><rect x="466.0" y="1421.5" width="12.0" height="12.8" fill="rgb(202,203,207)"/><rect x="477.7" y="1421.5" width="12.0" height="12.8" fill="rgb(197,198,202)"/><rect x="489.4" y="1421.5" width="12.0" height="12.8" fill="rgb(188,189,193)"/><rect x="501.1" y="1421.5" width="12.0" height="12.8" fill="rgb(183,184,188)"/><rect x="512.8" y="1421.5" width="12.0" height="12.8" fill="rgb(183,184,188)"/><rect x="524.5" y="1421.5" width="12.0" height="12.8" fill="rgb(169,170,174)"/><rect x="536.2" y="1421.5" width="12.0" height="12.8" fill="rgb(213,214,218)"/><rect x="547.9" y="1421.5" width="12.0" height="12.8" fill="rgb(171,172,176)"/><rect x="559.6" y="1421.5" width="12.0" height="12.8" fill="rgb(199,200,204)"/><rect x="571.3" y="1421.5" width="12.0" height="12.8" fill="rgb(209,210,214)"/><rect x="583.0" y="1421.5" width="12.0" height="12.8" fill="rgb(184,185,189)"/><rect x="594.7" y="1421.5" width="12.0" height="12.8" fill="rgb(195,196,200)"/><rect x="606.4" y="1421.5" width="12.0" height="12.8" fill="rgb(182,183,187)"/><rect x="618.1" y="1421.5" width="12.0" height="12.8" fill="rgb(212,213,217)"/><rect x="629.8" y="1421.5" width="12.0" height="12.8" fill="rgb(194,195,199)"/><rect x="641.5" y="1421.5" width="12.0" height="12.8" fill="rgb(193,194,198)"/><rect x="653.2" y="1421.5" width="12.0" height="12.8" fill="rgb(186,187,191)"/><rect x="664.9" y="1421.5" width="12.0" height="12.8" fill="rgb(200,201,205)"/><rect x="676.6" y="1421.5" width="12.0" height="12.8" fill="rgb(199,200,204)"/><rect x="688.3" y="1421.5" width="12.0" height="12.8" fill="rgb(187,188,192)"/><rect x="700.0" y="1421.5" width="12.0" height="12.8" fill="rgb(180,181,185)"/><rect x="711.7" y="1421.5" width="12.0" height="12.8" fill="rgb(182,183,187)"/><rect x="723.4" y="1421.5" width="12.0" height="12.8" fill="rgb(186,187,191)"/><rect x="735.1" y="1421.5" width="12.0" height="12.8" fill="rgb(207,208,212)"/><rect x="746.8" y="1421.5" width="12.0" height="12.8" fill="rgb(179,180,184)"/><rect x="758.5" y="1421.5" width="1.8" height="12.8" fill="rgb(199,200,204)"/><rect x="372.4" y="1434.0" width="12.0" height="10.3" fill="rgb(238,239,243)"/><rect x="384.1" y="1434.0" width="12.0" height="10.3" fill="rgb(236,237,241)"/><rect x="407.5" y="1434.0" width="12.0" height="10.3" fill="rgb(238,239,243)"/><rect x="594.7" y="1434.0" width="12.0" height="10.3" fill="rgb(241,242,246)"/><rect x="664.9" y="1434.0" width="12.0" height="10.3" fill="rgb(244,245,249)"/><rect x="676.6" y="1434.0" width="12.0" height="10.3" fill="rgb(239,240,244)"/><rect x="723.4" y="1434.0" width="12.0" height="10.3" fill="rgb(237,238,242)"/><rect x="253.0" y="1520.0" width="16.3" height="16.3" fill="rgb(224,225,229)"/><rect x="269.0" y="1520.0" width="16.3" height="16.3" fill="rgb(241,242,246)"/><rect x="285.0" y="1520.0" width="16.3" height="16.3" fill="rgb(218,219,223)"/><rect x="301.0" y="1520.0" width="16.3" height="16.3" fill="rgb(225,226,230)"/><rect x="317.0" y="1520.0" width="16.3" height="16.3" fill="rgb(242,243,247)"/><rect x="333.0" y="1520.0" width="16.3" height="16.3" fill="rgb(230,231,235)"/><rect x="381.0" y="1520.0" width="16.3" height="16.3" fill="rgb(226,227,231)"/><rect x="429.0" y="1520.0" width="16.3" height="16.3" fill="rgb(229,230,234)"/><rect x="445.0" y="1520.0" width="16.3" height="16.3" fill="rgb(248,249,253)"/><rect x="461.0" y="1520.0" width="16.3" height="16.3" fill="rgb(219,220,224)"/><rect x="477.0" y="1520.0" width="16.3" height="16.3" fill="rgb(240,241,245)"/><rect x="493.0" y="1520.0" width="16.3" height="16.3" fill="rgb(247,248,252)"/><rect x="509.0" y="1520.0" width="16.3" height="16.3" fill="rgb(218,219,223)"/><rect x="525.0" y="1520.0" width="16.3" height="16.3" fill="rgb(237,238,242)"/><rect x="541.0" y="1520.0" width="16.3" height="16.3" fill="rgb(238,239,243)"/><rect x="557.0" y="1520.0" width="16.3" height="16.3" fill="rgb(220,221,225)"/><rect x="605.0" y="1520.0" width="16.3" height="16.3" fill="rgb(248,249,253)"/><rect x="621.0" y="1520.0" width="16.3" height="16.3" fill="rgb(242,243,247)"/><rect x="637.0" y="1520.0" width="16.3" height="16.3" fill="rgb(226,227,231)"/><rect x="653.0" y="1520.0" width="16.3" height="16.3" fill="rgb(244,245,249)"/><rect x="669.0" y="1520.0" width="16.3" height="16.3" fill="rgb(247,248,252)"/><rect x="685.0" y="1520.0" width="16.3" height="16.3" fill="rgb(218,219,223)"/><rect x="701.0" y="1520.0" width="16.3" height="16.3" fill="rgb(241,242,246)"/><rect x="717.0" y="1520.0" width="16.3" height="16.3" fill="rgb(240,241,245)"/><rect x="733.0" y="1520.0" width="16.3" height="16.3" fill="rgb(237,238,242)"/><rect x="765.0" y="1520.0" width="16.3" height="16.3" fill="rgb(232,233,237)"/><rect x="781.0" y="1520.0" width="16.3" height="16.3" fill="rgb(243,244,248)"/><rect x="797.0" y="1520.0" width="16.3" height="16.3" fill="rgb(234,235,239)"/><rect x="829.0" y="1520.0" width="16.3" height="16.3" fill="rgb(225,226,230)"/><rect x="845.0" y="1520.0" width="16.3" height="16.3" fill="rgb(238,239,243)"/><rect x="877.0" y="1520.0" width="16.3" height="16.3" fill="rgb(228,229,233)"/><rect x="909.0" y="1520.0" width="4.3" height="16.3" fill="rgb(221,222,226)"/><rect x="253.0" y="1536.0" width="16.3" height="16.3" fill="rgb(184,185,189)"/><rect x="269.0" y="1536.0" width="16.3" height="16.3" fill="rgb(181,182,186)"/><rect x="285.0" y="1536.0" width="16.3" height="16.3" fill="rgb(199,200,204)"/><rect x="301.0" y="1536.0" width="16.3" height="16.3" fill="rgb(196,197,201)"/><rect x="317.0" y="1536.0" width="16.3" height="16.3" fill="rgb(176,177,181)"/><rect x="333.0" y="1536.0" width="16.3" height="16.3" fill="rgb(207,208,212)"/><rect x="349.0" y="1536.0" width="16.3" height="16.3" fill="rgb(183,184,188)"/><rect x="365.0" y="1536.0" width="16.3" height="16.3" fill="rgb(210,211,215)"/><rect x="381.0" y="1536.0" width="16.3" height="16.3" fill="rgb(186,187,191)"/><rect x="397.0" y="1536.0" width="16.3" height="16.3" fill="rgb(204,205,209)"/><rect x="413.0" y="1536.0" width="16.3" height="16.3" fill="rgb(184,185,189)"/><rect x="429.0" y="1536.0" width="16.3" height="16.3" fill="rgb(180,181,185)"/><rect x="445.0" y="1536.0" width="16.3" height="16.3" fill="rgb(179,180,184)"/><rect x="461.0" y="1536.0" width="16.3" height="16.3" fill="rgb(177,178,182)"/><rect x="477.0" y="1536.0" width="16.3" height="16.3" fill="rgb(205,206,210)"/><rect x="493.0" y="1536.0" width="16.3" height="16.3" fill="rgb(172,173,177)"/><rect x="509.0" y="1536.0" width="16.3" height="16.3" fill="rgb(183,184,188)"/><rect x="525.0" y="1536.0" width="16.3" height="16.3" fill="rgb(182,183,187)"/><rect x="541.0" y="1536.0" width="16.3" height="16.3" fill="rgb(174,175,179)"/><rect x="557.0" y="1536.0" width="16.3" height="16.3" fill="rgb(170,171,175)"/><rect x="573.0" y="1536.0" width="16.3" height="16.3" fill="rgb(198,199,203)"/><rect x="589.0" y="1536.0" width="16.3" height="16.3" fill="rgb(182,183,187)"/><rect x="605.0" y="1536.0" width="16.3" height="16.3" fill="rgb(191,192,196)"/><rect x="621.0" y="1536.0" width="16.3" height="16.3" fill="rgb(186,187,191)"/><rect x="637.0" y="1536.0" width="16.3" height="16.3" fill="rgb(171,172,176)"/><rect x="653.0" y="1536.0" width="16.3" height="16.3" fill="rgb(205,206,210)"/><rect x="669.0" y="1536.0" width="16.3" height="16.3" fill="rgb(172,173,177)"/><rect x="685.0" y="1536.0" width="16.3" height="16.3" fill="rgb(179,180,184)"/><rect x="701.0" y="1536.0" width="16.3" height="16.3" fill="rgb(184,185,189)"/><rect x="717.0" y="1536.0" width="16.3" height="16.3" fill="rgb(210,211,215)"/><rect x="733.0" y="1536.0" width="16.3" height="16.3" fill="rgb(174,175,179)"/><rect x="749.0" y="1536.0" width="16.3" height="16.3" fill="rgb(213,214,218)"/><rect x="765.0" y="1536.0" width="16.3" height="16.3" fill="rgb(181,182,186)"/><rect x="781.0" y="1536.0" width="16.3" height="16.3" fill="rgb(189,190,194)"/><rect x="797.0" y="1536.0" width="16.3" height="16.3" fill="rgb(181,182,186)"/><rect x="813.0" y="1536.0" width="16.3" height="16.3" fill="rgb(170,171,175)"/><rect x="829.0" y="1536.0" width="16.3" height="16.3" fill="rgb(209,210,214)"/><rect x="845.0" y="1536.0" width="16.3" height="16.3" fill="rgb(168,169,173)"/><rect x="861.0" y="1536.0" width="16.3" height="16.3" fill="rgb(194,195,199)"/><rect x="877.0" y="1536.0" width="16.3" height="16.3" fill="rgb(179,180,184)"/><rect x="893.0" y="1536.0" width="16.3" height="16.3" fill="rgb(172,173,177)"/><rect x="909.0" y="1536.0" width="4.3" height="16.3" fill="rgb(199,200,204)"/><rect x="253.0" y="1552.0" width="16.3" height="16.3" fill="rgb(196,197,201)"/><rect x="269.0" y="1552.0" width="16.3" height="16.3" fill="rgb(217,218,222)"/><rect x="285.0" y="1552.0" width="16.3" height="16.3" fill="rgb(201,202,206)"/><rect x="301.0" y="1552.0" width="16.3" height="16.3" fill="rgb(197,198,202)"/><rect x="317.0" y="1552.0" width="16.3" height="16.3" fill="rgb(217,218,222)"/><rect x="333.0" y="1552.0" width="16.3" height="16.3" fill="rgb(218,219,223)"/><rect x="349.0" y="1552.0" width="16.3" height="16.3" fill="rgb(211,212,216)"/><rect x="365.0" y="1552.0" width="16.3" height="16.3" fill="rgb(195,196,200)"/><rect x="381.0" y="1552.0" width="16.3" height="16.3" fill="rgb(228,229,233)"/><rect x="397.0" y="1552.0" width="16.3" height="16.3" fill="rgb(218,219,223)"/><rect x="413.0" y="1552.0" width="16.3" height="16.3" fill="rgb(215,216,220)"/><rect x="429.0" y="1552.0" width="16.3" height="16.3" fill="rgb(217,218,222)"/><rect x="445.0" y="1552.0" width="16.3" height="16.3" fill="rgb(205,206,210)"/><rect x="461.0" y="1552.0" width="16.3" height="16.3" fill="rgb(219,220,224)"/><rect x="477.0" y="1552.0" width="16.3" height="16.3" fill="rgb(219,220,224)"/><rect x="493.0" y="1552.0" width="16.3" height="16.3" fill="rgb(197,198,202)"/><rect x="509.0" y="1552.0" width="16.3" height="16.3" fill="rgb(215,216,220)"/><rect x="525.0" y="1552.0" width="16.3" height="16.3" fill="rgb(202,203,207)"/><rect x="541.0" y="1552.0" width="16.3" height="16.3" fill="rgb(195,196,200)"/><rect x="557.0" y="1552.0" width="16.3" height="16.3" fill="rgb(217,218,222)"/><rect x="573.0" y="1552.0" width="16.3" height="16.3" fill="rgb(215,216,220)"/><rect x="589.0" y="1552.0" width="16.3" height="16.3" fill="rgb(202,203,207)"/><rect x="605.0" y="1552.0" width="16.3" height="16.3" fill="rgb(210,211,215)"/><rect x="621.0" y="1552.0" width="16.3" height="16.3" fill="rgb(202,203,207)"/><rect x="637.0" y="1552.0" width="16.3" height="16.3" fill="rgb(198,199,203)"/><rect x="653.0" y="1552.0" width="16.3" height="16.3" fill="rgb(204,205,209)"/><rect x="669.0" y="1552.0" width="16.3" height="16.3" fill="rgb(194,195,199)"/><rect x="685.0" y="1552.0" width="16.3" height="16.3" fill="rgb(222,223,227)"/><rect x="701.0" y="1552.0" width="16.3" height="16.3" fill="rgb(230,231,235)"/><rect x="717.0" y="1552.0" width="16.3" height="16.3" fill="rgb(216,217,221)"/><rect x="733.0" y="1552.0" width="16.3" height="16.3" fill="rgb(202,203,207)"/><rect x="749.0" y="1552.0" width="16.3" height="16.3" fill="rgb(206,207,211)"/><rect x="765.0" y="1552.0" width="16.3" height="16.3" fill="rgb(204,205,209)"/><rect x="781.0" y="1552.0" width="16.3" height="16.3" fill="rgb(203,204,208)"/><rect x="797.0" y="1552.0" width="16.3" height="16.3" fill="rgb(194,195,199)"/><rect x="813.0" y="1552.0" width="16.3" height="16.3" fill="rgb(225,226,230)"/><rect x="829.0" y="1552.0" width="16.3" height="16.3" fill="rgb(214,215,219)"/><rect x="845.0" y="1552.0" width="16.3" height="16.3" fill="rgb(207,208,212)"/><rect x="861.0" y="1552.0" width="16.3" height="16.3" fill="rgb(204,205,209)"/><rect x="877.0" y="1552.0" width="16.3" height="16.3" fill="rgb(227,228,232)"/><rect x="893.0" y="1552.0" width="16.3" height="16.3" fill="rgb(194,195,199)"/><rect x="909.0" y="1552.0" width="4.3" height="16.3" fill="rgb(212,213,217)"/><rect x="281.0" y="1640.0" width="14.3" height="14.3" fill="rgb(235,236,240)"/><rect x="295.0" y="1640.0" width="14.3" height="14.3" fill="rgb(242,243,247)"/><rect x="309.0" y="1640.0" width="14.3" height="14.3" fill="rgb(231,232,236)"/><rect x="323.0" y="1640.0" width="14.3" height="14.3" fill="rgb(225,226,230)"/><rect x="337.0" y="1640.0" width="14.3" height="14.3" fill="rgb(239,240,244)"/><rect x="351.0" y="1640.0" width="14.3" height="14.3" fill="rgb(234,235,239)"/><rect x="365.0" y="1640.0" width="14.3" height="14.3" fill="rgb(218,219,223)"/><rect x="393.0" y="1640.0" width="14.3" height="14.3" fill="rgb(232,233,237)"/><rect x="421.0" y="1640.0" width="14.3" height="14.3" fill="rgb(242,243,247)"/><rect x="435.0" y="1640.0" width="14.3" height="14.3" fill="rgb(244,245,249)"/><rect x="463.0" y="1640.0" width="14.3" height="14.3" fill="rgb(221,222,226)"/><rect x="491.0" y="1640.0" width="14.3" height="14.3" fill="rgb(229,230,234)"/><rect x="519.0" y="1640.0" width="14.3" height="14.3" fill="rgb(234,235,239)"/><rect x="533.0" y="1640.0" width="14.3" height="14.3" fill="rgb(219,220,224)"/><rect x="547.0" y="1640.0" width="14.3" height="14.3" fill="rgb(220,221,225)"/><rect x="561.0" y="1640.0" width="14.3" height="14.3" fill="rgb(228,229,233)"/><rect x="575.0" y="1640.0" width="14.3" height="14.3" fill="rgb(234,235,239)"/><rect x="603.0" y="1640.0" width="14.3" height="14.3" fill="rgb(246,247,251)"/><rect x="617.0" y="1640.0" width="14.3" height="14.3" fill="rgb(248,249,253)"/><rect x="631.0" y="1640.0" width="14.3" height="14.3" fill="rgb(218,219,223)"/><rect x="645.0" y="1640.0" width="14.3" height="14.3" fill="rgb(237,238,242)"/><rect x="659.0" y="1640.0" width="14.3" height="14.3" fill="rgb(244,245,249)"/><rect x="701.0" y="1640.0" width="14.3" height="14.3" fill="rgb(227,228,232)"/><rect x="715.0" y="1640.0" width="14.3" height="14.3" fill="rgb(247,248,252)"/><rect x="729.0" y="1640.0" width="14.3" height="14.3" fill="rgb(239,240,244)"/><rect x="743.0" y="1640.0" width="14.3" height="14.3" fill="rgb(247,248,252)"/><rect x="771.0" y="1640.0" width="14.3" height="14.3" fill="rgb(237,238,242)"/><rect x="785.0" y="1640.0" width="2.3" height="14.3" fill="rgb(223,224,228)"/><rect x="267.0" y="1654.0" width="14.3" height="14.3" fill="rgb(207,208,212)"/><rect x="281.0" y="1654.0" width="14.3" height="14.3" fill="rgb(197,198,202)"/><rect x="295.0" y="1654.0" width="14.3" height="14.3" fill="rgb(200,201,205)"/><rect x="309.0" y="1654.0" width="14.3" height="14.3" fill="rgb(198,199,203)"/><rect x="323.0" y="1654.0" width="14.3" height="14.3" fill="rgb(184,185,189)"/><rect x="337.0" y="1654.0" width="14.3" height="14.3" fill="rgb(183,184,188)"/><rect x="351.0" y="1654.0" width="14.3" height="14.3" fill="rgb(170,171,175)"/><rect x="365.0" y="1654.0" width="14.3" height="14.3" fill="rgb(193,194,198)"/><rect x="379.0" y="1654.0" width="14.3" height="14.3" fill="rgb(185,186,190)"/><rect x="393.0" y="1654.0" width="14.3" height="14.3" fill="rgb(192,193,197)"/><rect x="407.0" y="1654.0" width="14.3" height="14.3" fill="rgb(184,185,189)"/><rect x="421.0" y="1654.0" width="14.3" height="14.3" fill="rgb(201,202,206)"/><rect x="435.0" y="1654.0" width="14.3" height="14.3" fill="rgb(191,192,196)"/><rect x="449.0" y="1654.0" width="14.3" height="14.3" fill="rgb(196,197,201)"/><rect x="463.0" y="1654.0" width="14.3" height="14.3" fill="rgb(205,206,210)"/><rect x="477.0" y="1654.0" width="14.3" height="14.3" fill="rgb(174,175,179)"/><rect x="491.0" y="1654.0" width="14.3" height="14.3" fill="rgb(202,203,207)"/><rect x="505.0" y="1654.0" width="14.3" height="14.3" fill="rgb(193,194,198)"/><rect x="519.0" y="1654.0" width="14.3" height="14.3" fill="rgb(191,192,196)"/><rect x="533.0" y="1654.0" width="14.3" height="14.3" fill="rgb(191,192,196)"/><rect x="547.0" y="1654.0" width="14.3" height="14.3" fill="rgb(191,192,196)"/><rect x="561.0" y="1654.0" width="14.3" height="14.3" fill="rgb(173,174,178)"/><rect x="575.0" y="1654.0" width="14.3" height="14.3" fill="rgb(179,180,184)"/><rect x="589.0" y="1654.0" width="14.3" height="14.3" fill="rgb(171,172,176)"/><rect x="603.0" y="1654.0" width="14.3" height="14.3" fill="rgb(201,202,206)"/><rect x="617.0" y="1654.0" width="14.3" height="14.3" fill="rgb(208,209,213)"/><rect x="631.0" y="1654.0" width="14.3" height="14.3" fill="rgb(205,206,210)"/><rect x="645.0" y="1654.0" width="14.3" height="14.3" fill="rgb(188,189,193)"/><rect x="659.0" y="1654.0" width="14.3" height="14.3" fill="rgb(170,171,175)"/><rect x="673.0" y="1654.0" width="14.3" height="14.3" fill="rgb(186,187,191)"/><rect x="687.0" y="1654.0" width="14.3" height="14.3" fill="rgb(195,196,200)"/><rect x="701.0" y="1654.0" width="14.3" height="14.3" fill="rgb(191,192,196)"/><rect x="715.0" y="1654.0" width="14.3" height="14.3" fill="rgb(176,177,181)"/><rect x="729.0" y="1654.0" width="14.3" height="14.3" fill="rgb(207,208,212)"/><rect x="743.0" y="1654.0" width="14.3" height="14.3" fill="rgb(169,170,174)"/><rect x="757.0" y="1654.0" width="14.3" height="14.3" fill="rgb(204,205,209)"/><rect x="771.0" y="1654.0" width="14.3" height="14.3" fill="rgb(174,175,179)"/><rect x="785.0" y="1654.0" width="2.3" height="14.3" fill="rgb(202,203,207)"/><rect x="267.0" y="1668.0" width="14.3" height="13.8" fill="rgb(229,230,234)"/><rect x="281.0" y="1668.0" width="14.3" height="13.8" fill="rgb(200,201,205)"/><rect x="295.0" y="1668.0" width="14.3" height="13.8" fill="rgb(222,223,227)"/><rect x="309.0" y="1668.0" width="14.3" height="13.8" fill="rgb(192,193,197)"/><rect x="323.0" y="1668.0" width="14.3" height="13.8" fill="rgb(207,208,212)"/><rect x="337.0" y="1668.0" width="14.3" height="13.8" fill="rgb(220,221,225)"/><rect x="351.0" y="1668.0" width="14.3" height="13.8" fill="rgb(201,202,206)"/><rect x="365.0" y="1668.0" width="14.3" height="13.8" fill="rgb(209,210,214)"/><rect x="379.0" y="1668.0" width="14.3" height="13.8" fill="rgb(208,209,213)"/><rect x="393.0" y="1668.0" width="14.3" height="13.8" fill="rgb(195,196,200)"/><rect x="407.0" y="1668.0" width="14.3" height="13.8" fill="rgb(227,228,232)"/><rect x="421.0" y="1668.0" width="14.3" height="13.8" fill="rgb(230,231,235)"/><rect x="435.0" y="1668.0" width="14.3" height="13.8" fill="rgb(220,221,225)"/><rect x="449.0" y="1668.0" width="14.3" height="13.8" fill="rgb(225,226,230)"/><rect x="463.0" y="1668.0" width="14.3" height="13.8" fill="rgb(207,208,212)"/><rect x="477.0" y="1668.0" width="14.3" height="13.8" fill="rgb(192,193,197)"/><rect x="491.0" y="1668.0" width="14.3" height="13.8" fill="rgb(226,227,231)"/><rect x="505.0" y="1668.0" width="14.3" height="13.8" fill="rgb(203,204,208)"/><rect x="519.0" y="1668.0" width="14.3" height="13.8" fill="rgb(195,196,200)"/><rect x="533.0" y="1668.0" width="14.3" height="13.8" fill="rgb(198,199,203)"/><rect x="547.0" y="1668.0" width="14.3" height="13.8" fill="rgb(227,228,232)"/><rect x="561.0" y="1668.0" width="14.3" height="13.8" fill="rgb(204,205,209)"/><rect x="575.0" y="1668.0" width="14.3" height="13.8" fill="rgb(204,205,209)"/><rect x="589.0" y="1668.0" width="14.3" height="13.8" fill="rgb(224,225,229)"/><rect x="603.0" y="1668.0" width="14.3" height="13.8" fill="rgb(218,219,223)"/><rect x="617.0" y="1668.0" width="14.3" height="13.8" fill="rgb(203,204,208)"/><rect x="631.0" y="1668.0" width="14.3" height="13.8" fill="rgb(196,197,201)"/><rect x="645.0" y="1668.0" width="14.3" height="13.8" fill="rgb(195,196,200)"/><rect x="659.0" y="1668.0" width="14.3" height="13.8" fill="rgb(222,223,227)"/><rect x="673.0" y="1668.0" width="14.3" height="13.8" fill="rgb(192,193,197)"/><rect x="687.0" y="1668.0" width="14.3" height="13.8" fill="rgb(219,220,224)"/><rect x="701.0" y="1668.0" width="14.3" height="13.8" fill="rgb(221,222,226)"/><rect x="715.0" y="1668.0" width="14.3" height="13.8" fill="rgb(220,221,225)"/><rect x="729.0" y="1668.0" width="14.3" height="13.8" fill="rgb(198,199,203)"/><rect x="743.0" y="1668.0" width="14.3" height="13.8" fill="rgb(194,195,199)"/><rect x="757.0" y="1668.0" width="14.3" height="13.8" fill="rgb(208,209,213)"/><rect x="771.0" y="1668.0" width="14.3" height="13.8" fill="rgb(209,210,214)"/><rect x="785.0" y="1668.0" width="2.3" height="13.8" fill="rgb(219,220,224)"/></svg>
<div class="box" style="left:0;top:1628px;width:3316px;height:68px;background:linear-gradient(to bottom, rgba(0,0,0,0), rgba(0,0,0,0.03) 55%, rgba(0,0,0,0.085));-webkit-mask-image:linear-gradient(to right,#000 0,#000 2350px,rgba(0,0,0,0) 2990px)"></div>

</body></html>
